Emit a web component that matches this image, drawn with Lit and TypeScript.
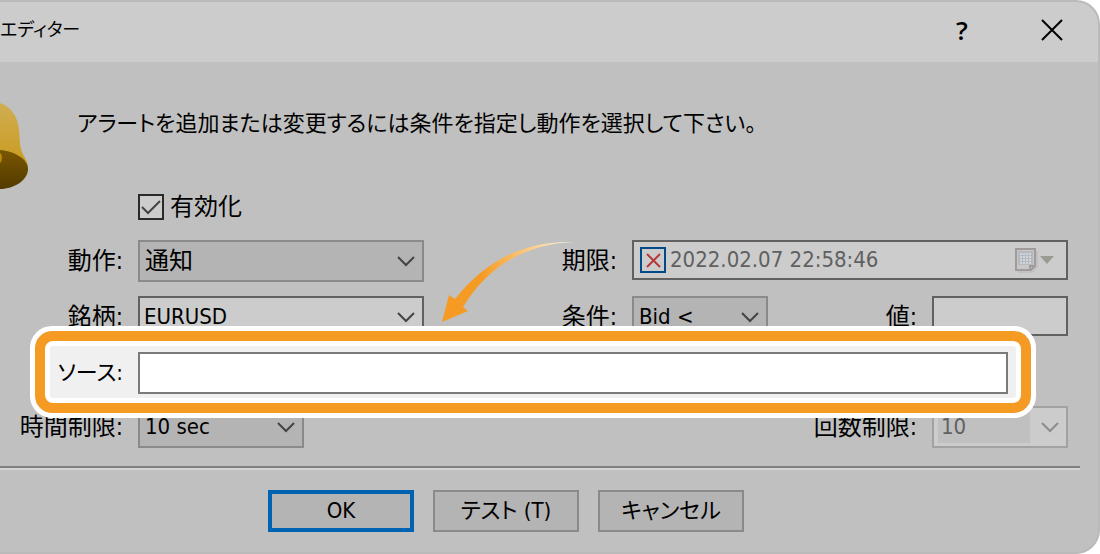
import { LitElement, html, css, svg } from "lit";
import { customElement, property } from "lit/decorators.js";

const chevron = html`<svg class="chevron" width="18" height="11" viewBox="0 0 18 11" aria-hidden="true">
  <path d="M1 1l8 8 8-8" fill="none" stroke="currentColor" stroke-width="2" />
</svg>`;

const dots = [0, 1, 2, 3].flatMap((row) =>
  [0, 1, 2, 3].map((col) => svg`<rect x=${6 + col * 3} y=${6 + row * 3} width="2" height="2" fill="#d2d6da" />`)
);

@customElement("alert-select")
export class AlertSelect extends LitElement {
  @property() value = "";
  @property() label = "";
  @property() kind = "flat";
  @property({ type: Boolean }) disabled = false;

  static styles = css`
    :host {
      display: block;
    }
    .box {
      display: grid;
      grid-template-columns: 1fr 32px;
      align-items: center;
      box-sizing: border-box;
      height: 42px;
      border: 2px solid #8a8a8a;
      background: #b4b4b4;
      color: #000;
    }
    .edit {
      border-color: #616161;
      background: #cccccc;
    }
    .off {
      border-color: #a2a2a2;
      background: #cccccc;
      color: #606060;
    }
    select {
      grid-area: 1 / 1 / 2 / 3;
      appearance: none;
      width: 100%;
      height: 38px;
      margin: 0;
      padding: 0 32px 0 5px;
      border: 0;
      border-radius: 0;
      outline: 0;
      background: none;
      color: inherit;
      opacity: 1;
      font: inherit;
      font-feature-settings: inherit;
    }
    .edit select {
      padding-left: 4px;
    }
    .off select {
      grid-area: 1 / 1;
      height: 32px;
      margin-left: 4px;
      padding: 0 4px 0 3px;
      width: calc(100% - 8px);
      background: #c0c0c0;
    }
    .chevron {
      grid-area: 1 / 2;
      justify-self: center;
      color: #444;
      pointer-events: none;
    }
    .off .chevron {
      color: #8c8c8c;
    }
  `;

  render() {
    return html`<div class="box ${this.kind}">
      <select aria-label=${this.label} ?disabled=${this.disabled}>
        <option>${this.value}</option>
      </select>
      ${chevron}
    </div>`;
  }
}

@customElement("app-root")
export class AppRoot extends LitElement {
  static styles = css`
    :host {
      display: block;
      background: #fff;
      color: #000;
      font: 22px/32px "DejaVu Sans Condensed", "Noto Sans CJK JP", sans-serif;
      font-feature-settings: "palt";
    }
    .dialog {
      position: relative;
      box-sizing: border-box;
      min-height: 100vh;
      overflow: hidden;
      border: 2px solid #bababa;
      border-left: 0;
      border-radius: 0 24px 24px 0;
      background: #c0c0c0;
    }
    .title {
      display: flex;
      align-items: center;
      box-sizing: border-box;
      height: 60px;
      padding: 0 26px 4px 0;
      background: #cccccc;
    }
    h1 {
      margin: 0 auto 0 0;
      font: inherit;
      font-size: 18px;
      white-space: nowrap;
    }
    button {
      margin: 0;
      padding: 0;
      border: 0;
      border-radius: 0;
      background: none;
      color: inherit;
      font: inherit;
      font-feature-settings: inherit;
    }
    .tool {
      display: grid;
      place-items: center;
      width: 40px;
      height: 40px;
    }
    .help {
      margin-right: 50px;
      font: 600 26px/40px "Open Sans", sans-serif;
    }
    .intro {
      display: flex;
      gap: 49px;
      padding-top: 40px;
    }
    .bell {
      flex: none;
    }
    .intro p {
      margin: 6px 0 0;
    }
    .enable {
      display: flex;
      align-items: center;
      gap: 6px;
      height: 30px;
      margin: 2px 0 18px 138px;
      font-size: 24px;
    }
    .tick {
      display: grid;
      width: 26px;
      height: 26px;
    }
    .tick input {
      grid-area: 1 / 1;
      appearance: none;
      box-sizing: border-box;
      width: 26px;
      height: 26px;
      margin: 0;
      border: 2px solid #2a2a2a;
      background: #cccccc;
    }
    .tick svg {
      grid-area: 1 / 1;
      z-index: 1;
      pointer-events: none;
    }
    .tick .blue {
      border-color: #004a87;
    }
    .form {
      display: grid;
      grid-template-columns: 124px 286fr 180px 136fr 136px 136fr;
      gap: 14px;
      align-items: start;
      margin-right: 30px;
    }
    .label {
      padding-right: 1px;
      text-align: right;
      font-size: 24px;
      line-height: 42px;
      white-space: nowrap;
    }
    .field {
      box-sizing: border-box;
      width: 100%;
      height: 40px;
      margin: 0;
      padding: 0 6px;
      border: 2px solid #616161;
      border-radius: 0;
      outline: 0;
      background: #cccccc;
      font: inherit;
    }
    .date {
      grid-column: 4 / 7;
      display: flex;
      align-items: center;
      gap: 4px;
      padding-right: 12px;
    }
    .stamp {
      flex: 1;
      min-width: 0;
      height: 32px;
      padding: 0;
      border: 0;
      background: none;
      color: #606060;
      font: inherit;
    }
    .picker {
      display: flex;
      align-items: center;
      gap: 2px;
    }
    .ring {
      position: relative;
      z-index: 1;
      grid-column: 1 / 7;
      margin: -26px 32px -26px 30px;
      padding: 10px;
      border: 5px solid #fff;
      border-radius: 22px;
      background: #f59b23;
      background-clip: padding-box;
    }
    .inner {
      display: grid;
      grid-template-columns: 74px 1fr;
      gap: 14px;
      padding: 6px 8px 4px 0;
      border: 5px solid #fff;
      border-radius: 8px;
      background: #f0f0f0;
    }
    .inner .label {
      font-size: 22px;
    }
    .source {
      height: 42px;
      border-color: #7a7a7a;
      background: #fff;
    }
    .large {
      font-size: 24px;
    }
    .limit {
      width: 166px;
    }
    .count {
      grid-column: 4 / 6;
    }
    hr {
      height: 2px;
      margin: 18px 18px 0 0;
      border: 0;
      border-bottom: 2px solid #d4d4d4;
      background: #808080;
    }
    .actions {
      display: flex;
      gap: 19px;
      padding: 20px 20px 20px 268px;
    }
    .action {
      box-sizing: border-box;
      width: 146px;
      height: 42px;
      border: 2px solid #8a8a8a;
      background: #b4b4b4;
      white-space: nowrap;
    }
    .primary {
      border: 4px solid #0063b1;
    }
    .arrow {
      position: absolute;
      z-index: 2;
      left: 440px;
      top: 236px;
    }
  `;

  render() {
    return html`
      <main class="dialog">
        <header class="title">
          <h1>エディター</h1>
          <button class="tool help" aria-label="ヘルプ">?</button>
          <button class="tool" aria-label="閉じる">
            <svg width="22" height="22" viewBox="0 0 22 22">
              <path d="M1 1l20 20M21 1L1 21" stroke="#000" stroke-width="2" />
            </svg>
          </button>
        </header>

        <div class="intro">
          <svg class="bell" width="28" height="88" viewBox="0 0 28 88" aria-hidden="true">
            <defs>
              <linearGradient id="gold" x1="0" y1="0" x2="0" y2="1">
                <stop offset="0" stop-color="#d0ad52" />
                <stop offset="1" stop-color="#c99a1c" />
              </linearGradient>
              <linearGradient id="mouth" x1="0" y1="0" x2="0" y2="1">
                <stop offset="0" stop-color="#7a5700" />
                <stop offset="1" stop-color="#523a00" />
              </linearGradient>
            </defs>
            <path d="M0 1C10 4 18 14 19 28c1 15 1 20 6 28 3 5 3 8 2 12L0 60z" fill="url(#gold)" />
            <path d="M0 48C14 49 28 57 28 67 28 78 14 87 0 87z" fill="url(#mouth)" />
            <path d="M0 51c2 1 3 7 0 10z" fill="#c08a00" />
          </svg>
          <p>アラートを追加または変更するには条件を指定し動作を選択して下さい。</p>
        </div>

        <label class="enable">
          <span class="tick">
            <input type="checkbox" checked />
            <svg width="26" height="26" viewBox="0 0 26 26" aria-hidden="true">
              <path d="M4 13l6 6L22 7" fill="none" stroke="#444" stroke-width="2" />
            </svg>
          </span>
          有効化
        </label>

        <div class="form">
          <span class="label">動作:</span>
          <alert-select class="large" label="動作" value="通知"></alert-select>
          <label class="label" for="stamp">期限:</label>
          <div class="field date">
            <span class="tick">
              <input class="blue" type="checkbox" aria-label="期限を使用" />
              <svg width="26" height="26" viewBox="0 0 26 26" aria-hidden="true">
                <path d="M7 7l13 13M20 7L7 20" stroke="#b93838" stroke-width="2" />
              </svg>
            </span>
            <input class="stamp" id="stamp" value="2022.02.07 22:58:46" disabled />
            <button class="picker" aria-label="カレンダー" disabled>
              <svg width="24" height="26" viewBox="0 0 24 26">
                <path d="M4 25h15l4-5V4" fill="none" stroke="#b8b4b4" stroke-width="1" />
                <path d="M2 2h19v17l-4 4H2z" fill="#c8c8c8" stroke="#a09a9a" stroke-width="2" />
                <path d="M4 4h15v14H4z" fill="#b4babf" />
                ${dots}
                <path d="M16 23v-4h5" fill="none" stroke="#a09a9a" stroke-width="2" />
              </svg>
              <svg width="14" height="8" viewBox="0 0 14 8"><path d="M0 0h14L7 8z" fill="#9b9b94" /></svg>
            </button>
          </div>

          <span class="label">銘柄:</span>
          <alert-select label="銘柄" value="EURUSD" kind="edit"></alert-select>
          <span class="label">条件:</span>
          <alert-select label="条件" value="Bid &lt;"></alert-select>
          <label class="label" for="price">値:</label>
          <input class="field" id="price" />

          <div class="ring">
            <div class="inner">
              <label class="label" for="source">ソース:</label>
              <input class="field source" id="source" />
            </div>
          </div>

          <span class="label">時間制限:</span>
          <alert-select class="limit" label="時間制限" value="10 sec"></alert-select>
          <span class="label count">回数制限:</span>
          <alert-select label="回数制限" value="10" kind="off" disabled></alert-select>
        </div>

        <hr />

        <div class="actions">
          <button class="action primary">OK</button>
          <button class="action">テスト (T)</button>
          <button class="action">キャンセル</button>
        </div>

        <svg class="arrow" width="136" height="88" viewBox="0 0 136 88" aria-hidden="true">
          <defs>
            <linearGradient id="fade" x1="0" y1="0" x2="1" y2="0">
              <stop offset="0.3" stop-color="#f59b23" />
              <stop offset="0.65" stop-color="#fbc983" />
              <stop offset="1" stop-color="#fff6e8" />
            </linearGradient>
          </defs>
          <path d="M2 84L9 57l6 4C42 27 80 2 134 4 86 6 48 28 23 69l5 4z" fill="url(#fade)" />
        </svg>
      </main>
    `;
  }
}
